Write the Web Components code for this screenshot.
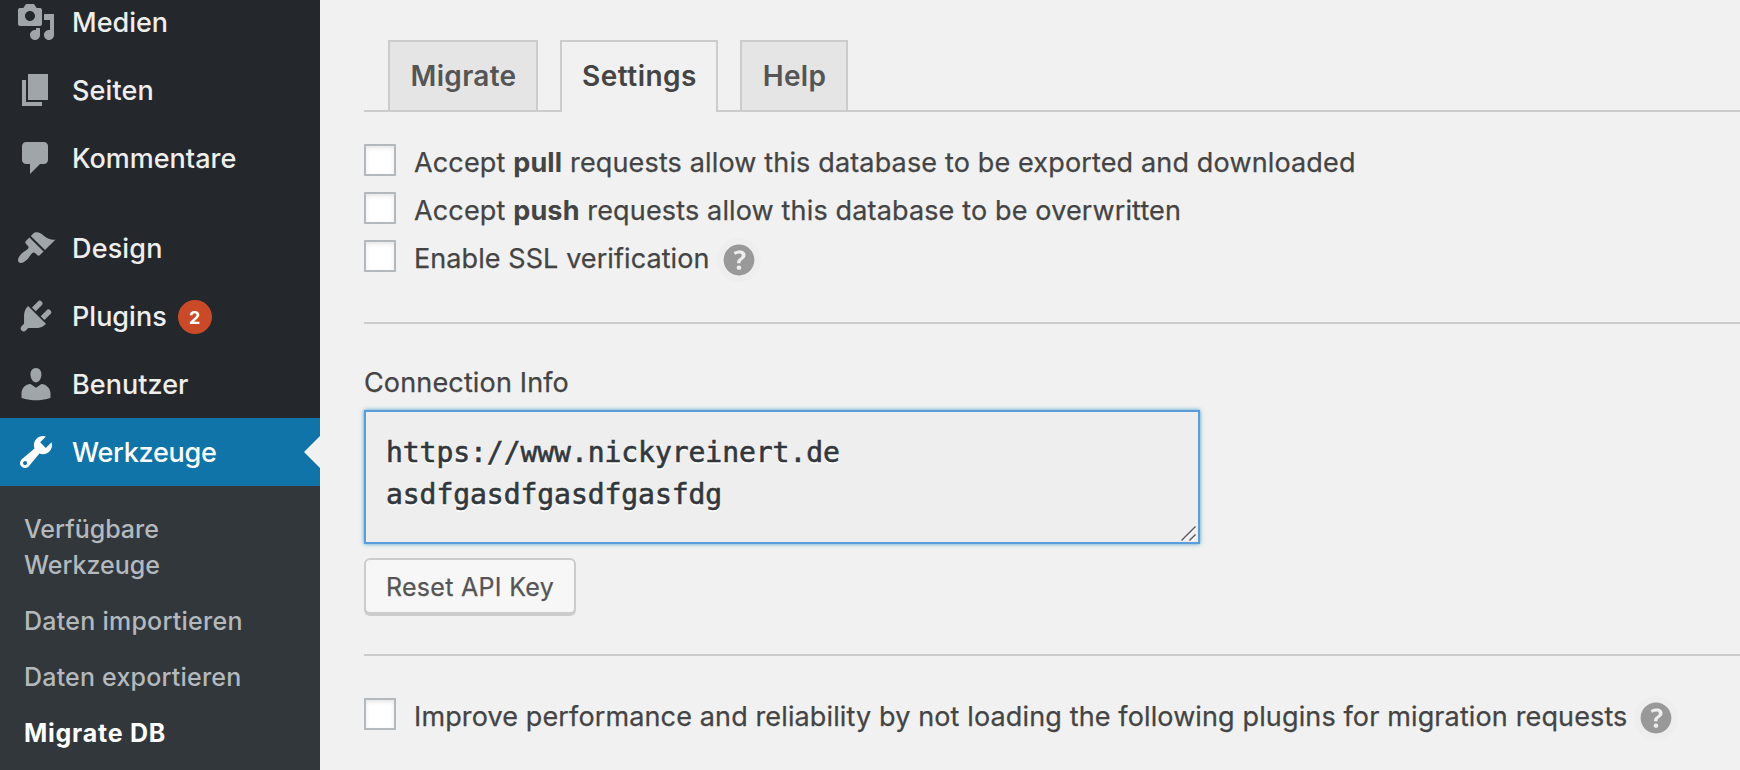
<!DOCTYPE html>
<html lang="de">
<head>
<meta charset="utf-8">
<title>Migrate DB</title>
<style>
  html, body { margin: 0; height: 100%; overflow: hidden; }
  body { background: #f1f1f1; font-family: Inter, "Liberation Sans", sans-serif; }
</style>
</head>
<body>
<admin-page>
  <admin-menu slot="menu">
    <menu-item icon="media">Medien</menu-item>
    <menu-item icon="page" style="letter-spacing:.1px">Seiten</menu-item>
    <menu-item icon="comments">Kommentare</menu-item>
    <menu-item icon="appearance" separated style="letter-spacing:.15px">Design</menu-item>
    <menu-item icon="plugins">Plugins<count-badge slot="badge">2</count-badge></menu-item>
    <menu-item icon="users" style="letter-spacing:.05px">Benutzer</menu-item>
    <menu-item icon="tools" current style="letter-spacing:-.25px">Werkzeuge</menu-item>
    <sub-menu>
      <sub-item style="letter-spacing:0">Verfügbare<br>Werkzeuge</sub-item>
      <sub-item style="letter-spacing:.25px">Daten importieren</sub-item>
      <sub-item style="letter-spacing:.2px">Daten exportieren</sub-item>
      <sub-item current>Migrate DB</sub-item>
    </sub-menu>
  </admin-menu>

  <tab-bar>
    <tab-item style="width:150px">Migrate</tab-item>
    <tab-item style="width:158px;letter-spacing:.5px" active>Settings</tab-item>
    <tab-item style="width:108px">Help</tab-item>
  </tab-bar>
  <option-list>
    <check-option>Accept <b>pull</b> requests allow this database to be exported and downloaded</check-option>
    <check-option>Accept <b>push</b> requests allow this database to be overwritten</check-option>
    <check-option help style="letter-spacing:.08px">Enable SSL verification</check-option>
  </option-list>
  <section-rule></section-rule>
  <connection-info>
    <span slot="title">Connection Info</span>https://www.nickyreinert.de
asdfgasdfgasdfgasfdg<span slot="action">Reset API Key</span></connection-info>
  <section-rule></section-rule>
  <option-list style="padding-top:34px">
    <check-option help style="letter-spacing:.13px">Improve performance and reliability by not loading the following plugins for migration requests</check-option>
  </option-list>
</admin-page>

<script>
const ICONS = {
  media: 'M13 11V4c0-.55-.45-1-1-1h-1.67L9 1H5L3.67 3H2c-.55 0-1 .45-1 1v7c0 .55.45 1 1 1h10c.55 0 1-.45 1-1zM7 4.5c1.38 0 2.5 1.12 2.5 2.5S8.38 9.5 7 9.5 4.5 8.38 4.5 7 5.62 4.5 7 4.5zM14 6h5v10.5c0 1.38-1.12 2.5-2.5 2.5S14 17.88 14 16.5s1.12-2.5 2.5-2.5c.17 0 .34.02.5.05V9h-3V6zm-4 8.05V13h2v3.5c0 1.38-1.12 2.5-2.5 2.5S7 17.88 7 16.5 8.12 14 9.5 14c.17 0 .34.02.5.05z',
  page: 'M6 15V2h10v13H6zm-1 1h8v2H3V5h2v11z',
  comments: 'M5 2h9q.82 0 1.41.59T16 4v7q0 .82-.59 1.41T14 13h-2l-5 5v-5H5q-.82 0-1.41-.59T3 11V4q0-.82.59-1.41T5 2z',
  appearance: 'M14.48 11.06L7.41 3.99l1.5-1.5c.5-.56 2.3-.47 3.51.32 1.21.8 1.43 1.28 2.91 2.1 1.18.64 2.45 1.26 4.45.85zm-.71.71L6.7 4.7 4.93 6.47c-.39.39-.39 1.02 0 1.41l1.06 1.06c.39.39.39 1.03 0 1.42-.6.6-1.43 1.11-2.21 1.69-.35.26-.7.53-1.01.84C1.43 14.23.4 16.08 1.4 17.07c.99 1 2.84-.03 4.18-1.36.31-.31.58-.66.85-1.02.57-.78 1.08-1.61 1.69-2.21.39-.39 1.02-.39 1.41 0l1.06 1.06c.39.39 1.02.39 1.41 0z',
  plugins: 'M13.11 4.36L9.87 7.6 8 5.73l3.24-3.24c.35-.34 1.05-.2 1.56.32.52.51.66 1.21.31 1.55zm-8 1.77l.91-1.12 9.01 9.01-1.19.84c-.71.71-2.63 1.16-3.82 1.16H6.14L4.9 17.26c-.59.59-1.54.59-2.12 0-.59-.58-.59-1.53 0-2.12l1.24-1.24v-3.88c0-1.13.4-3.19 1.09-3.89zm7.26 3.97l3.24-3.24c.34-.35 1.04-.21 1.55.31.52.51.66 1.21.31 1.55l-3.24 3.25z',
  users: 'M10 9.25c-2.27 0-2.73-3.44-2.73-3.44C7 4.02 7.82 2 9.97 2c2.16 0 2.98 2.02 2.71 3.81 0 0-.41 3.44-2.68 3.44zm0 2.57L12.72 10c2.39 0 4.52 2.33 4.52 4.53v2.49s-3.65 1.13-7.24 1.13c-3.65 0-7.24-1.13-7.24-1.13v-2.49c0-2.25 1.94-4.48 4.47-4.48z',
  tools: 'M16.68 9.77c-1.34 1.34-3.3 1.67-4.95.99l-5.41 6.52c-.99.99-2.59.99-3.58 0s-.99-2.59 0-3.57l6.52-5.42c-.68-1.65-.35-3.61.99-4.95 1.28-1.28 3.12-1.62 4.72-1.06l-2.89 2.89 2.82 2.82 2.86-2.87c.53 1.58.18 3.39-1.08 4.65zM3.81 16.21c.4.39 1.04.39 1.43 0 .4-.4.4-1.04 0-1.43-.39-.4-1.03-.4-1.43 0-.39.39-.39 1.03 0 1.43z',
  help: 'M17 10c0-3.87-3.14-7-7-7-3.87 0-7 3.13-7 7s3.13 7 7 7c3.86 0 7-3.13 7-7zm-6.3 1.48H9.14v-.43c0-.38.08-.7.24-.98s.46-.57.88-.89c.41-.29.68-.53.81-.71.14-.18.2-.39.2-.62 0-.25-.09-.44-.28-.58-.19-.13-.45-.19-.79-.19-.58 0-1.25.19-2 .57l-.64-1.28c.87-.49 1.8-.74 2.77-.74.81 0 1.45.2 1.92.58.48.39.71.91.71 1.55 0 .43-.09.8-.29 1.11-.19.32-.57.67-1.11 1.06-.38.28-.61.49-.71.63-.1.15-.15.34-.15.57v.35zm-1.47 2.74c-.18-.17-.27-.42-.27-.73 0-.33.08-.58.26-.75s.43-.25.77-.25c.32 0 .57.09.75.26s.27.42.27.74c0 .3-.09.55-.27.72-.18.18-.43.27-.75.27-.33 0-.58-.09-.76-.26z'
};

function component(name, html) {
  customElements.define(name, class extends HTMLElement {
    constructor() {
      super();
      this.attachShadow({ mode: 'open' });
    }
    connectedCallback() {
      this.shadowRoot.innerHTML = typeof html === 'function' ? html(this) : html;
    }
  });
}

component('admin-page', `
  <style>
    :host { display: grid; grid-template-columns: 320px 1fr; height: 770px; overflow: hidden; }
    main { padding: 40px 0 0 44px; min-width: 0; color: #444; }
  </style>
  <slot name="menu"></slot>
  <main><slot></slot></main>`);

component('admin-menu', `
  <style>
    :host { display: flex; flex-direction: column; height: 782px; margin-top: -12px; background: #24282d; }
  </style>
  <slot></slot>`);

component('menu-item', el => `
  <style>
    :host { display: flex; flex: none; align-items: center; height: 68px; padding-left: 16px;
            color: #eee; font-size: 27px; font-weight: 500; line-height: 36px; white-space: nowrap; }
    :host([separated]) { margin-top: 22px; }
    :host([current]) { background: #1074a8; color: #fff; }
    svg { width: 40px; height: 40px; margin-right: 16px; fill: #a0a5aa; flex: none; }
    :host([current]) svg { fill: #fff; }
    .arrow { display: none; margin-left: auto; border: 16px solid transparent; border-left: 0; border-right-color: #f1f1f1; }
    :host([current]) .arrow { display: block; }
    .label { padding-top: 1px; }
  </style>
  <svg viewBox="0 0 20 20"><path d="${ICONS[el.getAttribute('icon')]}"/></svg>
  <span class="label"><slot></slot></span><slot name="badge"></slot><i class="arrow"></i>`);

component('count-badge', `
  <style>
    :host { display: flex; align-items: center; justify-content: center; box-sizing: border-box; width: 34px; height: 34px;
            margin: 2px 0 0 11px; padding-top: 1px; border-radius: 17px; background: #ca4a28; color: #fff;
            font-size: 18px; font-weight: 700; line-height: 34px; letter-spacing: 0; }
  </style>
  <slot></slot>`);

component('sub-menu', `
  <style>
    :host { display: flex; flex-direction: column; flex: 1; padding-top: 15px; background: #32373c; }
  </style>
  <slot></slot>`);

component('sub-item', `
  <style>
    :host { display: block; padding: 10px 24px; color: #b4b9be; font-size: 25px; font-weight: 500;
            line-height: 36px; white-space: nowrap; }
    :host([current]) { color: #fff; font-weight: 700; letter-spacing: .75px; }
  </style>
  <slot></slot>`);

component('tab-bar', `
  <style>
    :host { display: flex; gap: 22px; height: 70px; padding-left: 24px; border-bottom: 2px solid #ccc; }
  </style>
  <slot></slot>`);

component('tab-item', `
  <style>
    :host { display: flex; box-sizing: border-box; align-items: center; justify-content: center; height: 70px;
            padding-left: 1px; border: 2px solid #ccc; border-bottom: 0; background: #e5e5e5; color: #555;
            font-size: 28px; font-weight: 600; line-height: 36px; letter-spacing: .3px; }
    :host([active]) { height: 72px; padding-bottom: 2px; background: #f1f1f1; color: #444; }
  </style>
  <slot></slot>`);

component('option-list', `
  <style>:host { display: flex; flex-direction: column; padding-top: 24px; }</style>
  <slot></slot>`);

component('check-option', el => `
  <style>
    :host { display: flex; align-items: center; height: 48px; font-size: 27px; line-height: 40px;
            letter-spacing: .15px; white-space: nowrap; }
    .box { box-sizing: border-box; width: 32px; height: 32px; margin-right: 18px; border: 2px solid #b4b9be;
           background: #fff; box-shadow: inset 0 2px 4px rgba(0,0,0,.1); flex: none; }
    .label { padding-top: 5px; -webkit-text-stroke: .25px; }
    ::slotted(b) { font-weight: 700; -webkit-text-stroke: 0; }
    svg { width: 44px; height: 44px; margin: 8px 0 0 7px; border-radius: 50%; background: #eee; fill: #999; flex: none; }
  </style>
  <span class="box"></span><span class="label"><slot></slot></span>
  ${el.hasAttribute('help') ? `<svg viewBox="0 0 20 20"><path d="${ICONS.help}"/></svg>` : ''}`);

component('section-rule', `
  <style>:host { display: block; height: 2px; margin-top: 42px; background: #ccc; }
  :host(:nth-of-type(2)) { margin-top: 40px; }</style>`);

component('connection-info', `
  <style>
    :host { display: block; padding-top: 39px; }
    .title { font-size: 27px; line-height: 40px; letter-spacing: .15px; -webkit-text-stroke: .25px; }
    .field { display: flex; box-sizing: border-box; width: 836px; height: 134px; margin-top: 7px; padding: 20px 2px 1px 20px;
             border: 2px solid #5b9dd9; background: #eee; box-shadow: 0 0 4px rgba(30,140,190,.8);
             color: #32373c; font: 28px/42px "DejaVu Sans Mono", monospace; letter-spacing: -.05px; text-shadow: 0 2px 0 #fff; }
    .value { flex: 1; white-space: pre; -webkit-text-stroke: .6px; }
    .grip { align-self: flex-end; width: 15px; height: 15px; }
    button { display: block; box-sizing: border-box; width: 212px; height: 56px; margin: 14px 0 2px; padding: 2px 0 0;
             border: 2px solid #ccc; border-radius: 6px; background: #f7f7f7; box-shadow: 0 2px 0 #ccc;
             color: #555; font: 25px/36px Inter, sans-serif; letter-spacing: .3px; -webkit-text-stroke: .25px; }
  </style>
  <div class="title"><slot name="title"></slot></div>
  <div class="field">
    <div class="value"></div>
    <svg class="grip" viewBox="0 0 15 15" fill="none" stroke-width="1.4">
      <path d="M2 15L15 2M10 15L15 10" stroke="#fff"/><path d="M.5 14.5L14.5 .5M8.5 14.5L14.5 8.500" stroke="#555"/>
    </svg>
  </div>
  <button><slot name="action"></slot></button>`);

// The field keeps its own copy of the value, one line for each line of the element's text.
document.querySelectorAll('connection-info').forEach(el => {
  const text = [...el.childNodes].filter(n => n.nodeType === Node.TEXT_NODE);
  el.shadowRoot.querySelector('.value').textContent = text.map(n => n.data).join('').trim();
  text.forEach(n => n.remove());
});
</script>
</body>
</html>
